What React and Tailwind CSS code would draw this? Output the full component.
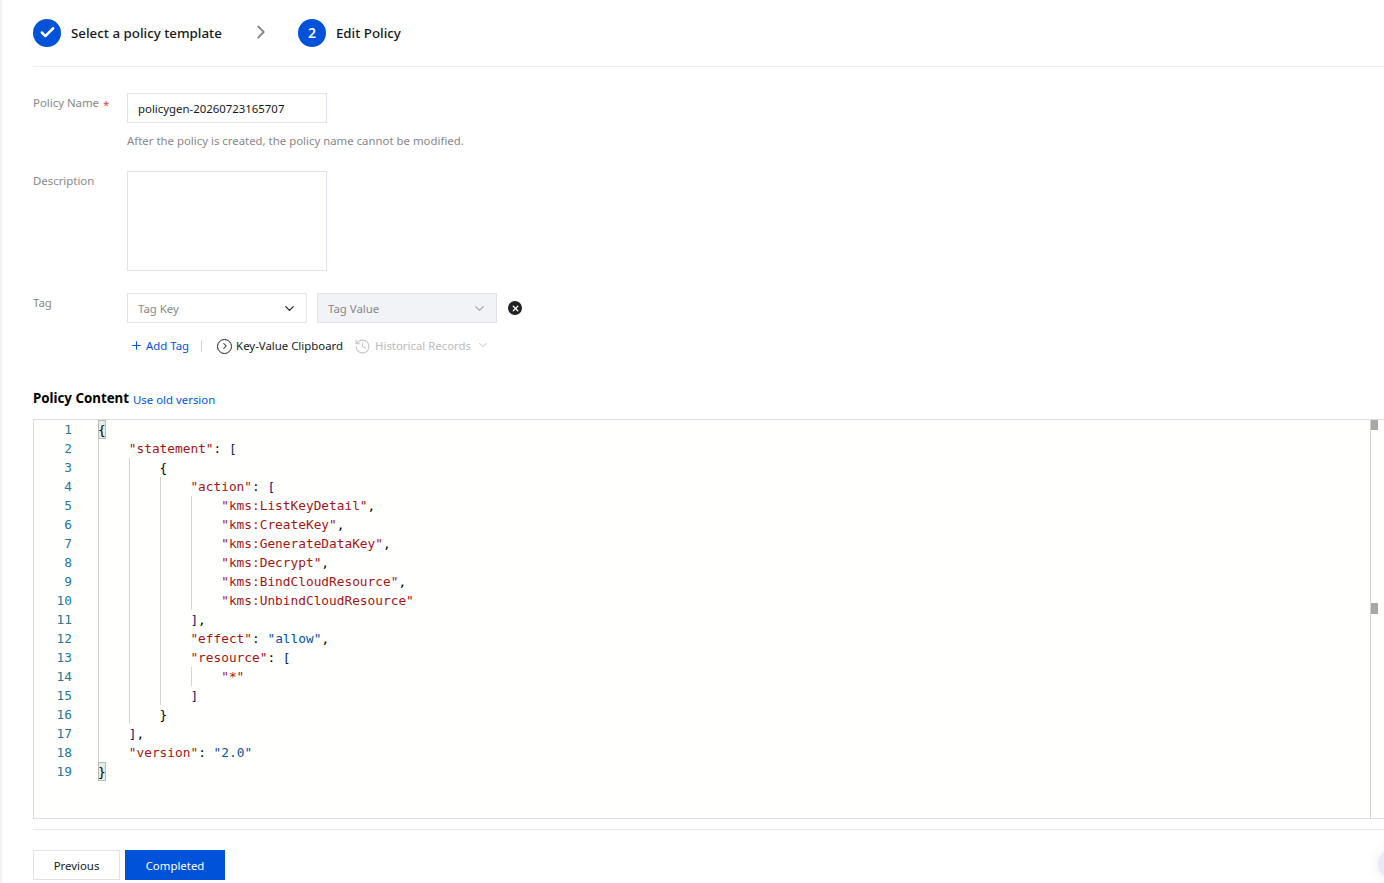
import { Check, ChevronDown, ChevronRight, History, Plus, X } from "lucide-react";

const K = "text-[#a31515]";
const V = "text-[#0451a5]";
const P = "text-[#000000]";
const B = "text-[#0b1a66]";

// each line: indent level, guide levels drawn, tokens
const codeLines = [
  { indent: 0, guides: [], bracket: true, tokens: [["{", P]] },
  { indent: 1, guides: [0], tokens: [['"statement"', K], [": ", P], ["[", B]] },
  { indent: 2, guides: [0, 1], tokens: [["{", P]] },
  { indent: 3, guides: [0, 1, 2], tokens: [['"action"', K], [": ", P], ["[", B]] },
  { indent: 4, guides: [0, 1, 2, 3], tokens: [['"kms:ListKeyDetail"', K], [",", P]] },
  { indent: 4, guides: [0, 1, 2, 3], tokens: [['"kms:CreateKey"', K], [",", P]] },
  { indent: 4, guides: [0, 1, 2, 3], tokens: [['"kms:GenerateDataKey"', K], [",", P]] },
  { indent: 4, guides: [0, 1, 2, 3], tokens: [['"kms:Decrypt"', K], [",", P]] },
  { indent: 4, guides: [0, 1, 2, 3], tokens: [['"kms:BindCloudResource"', K], [",", P]] },
  { indent: 4, guides: [0, 1, 2, 3], tokens: [['"kms:UnbindCloudResource"', K]] },
  { indent: 3, guides: [0, 1, 2], tokens: [["]", B], [",", P]] },
  { indent: 3, guides: [0, 1, 2], tokens: [['"effect"', K], [": ", P], ['"allow"', V], [",", P]] },
  { indent: 3, guides: [0, 1, 2], tokens: [['"resource"', K], [": ", P], ["[", B]] },
  { indent: 4, guides: [0, 1, 2, 3], tokens: [['"*"', K]] },
  { indent: 3, guides: [0, 1, 2], tokens: [["]", B]] },
  { indent: 2, guides: [0, 1], tokens: [["}", P]] },
  { indent: 1, guides: [0], tokens: [["]", B], [",", P]] },
  { indent: 1, guides: [0], tokens: [['"version"', K], [": ", P], ['"2.0"', V]] },
  { indent: 0, guides: [], bracket: true, tokens: [["}", P]] },
];

const guideClass = ["left-0", "left-[31px]", "left-[62px]", "left-[93px]"];

const CodeLine = ({ line, number }) => (
  <div className="flex h-[19px] leading-[19px]">
    <div className="w-[38px] shrink-0 text-right text-[#237893]">{number}</div>
    <div className="relative ml-[26px] flex-1 whitespace-pre">
      {line.guides.map((g) => (
        <span key={g} className={`absolute top-0 h-[19px] w-px bg-[#d3d3d3] ${guideClass[g]}`} />
      ))}
      {line.bracket && (
        <span className="absolute left-0 top-0 h-[19px] w-[8px] border border-[#b9b9b9] bg-[#0064001a]" />
      )}
      <span className="relative" style={{ marginLeft: line.indent * 30.8 }}>
        {line.tokens.map(([text, color], i) => (
          <span key={i} className={color}>
            {text}
          </span>
        ))}
      </span>
    </div>
  </div>
);

const FieldLabel = ({ children, className = "" }) => (
  <div className={`w-[94px] shrink-0 text-[#888888] ${className}`}>{children}</div>
);

export default function App() {
  return (
    <div className="relative h-[883px] w-full overflow-hidden bg-white font-['Noto_Sans','Open_Sans',sans-serif] text-[11.4px] text-[#000000]">
      <div className="flex h-full">
        <div className="w-[2px] shrink-0 bg-[#f1f2f6]" />
        <div className="min-w-0 flex-1 pl-[31px]">
          {/* steps */}
          <div className="flex h-[67px] items-center border-b border-[#ebedf3] pb-px">
            <div className="flex h-[28px] w-[28px] items-center justify-center rounded-full bg-[#0052d9] text-white">
              <Check size={17} strokeWidth={3.5} />
            </div>
            <span className="ml-[10px] pt-px text-[13.35px] font-medium text-[#16181d]">Select a policy template</span>
            <ChevronRight size={22} strokeWidth={2} className="ml-[28px] -translate-y-px text-[#888888]" />
            <div className="ml-[26px] flex h-[28px] w-[28px] items-center justify-center rounded-full bg-[#0052d9] text-[14px] font-semibold text-white">
              2
            </div>
            <span className="ml-[10px] pt-px text-[13.35px] font-medium text-[#16181d]">Edit Policy</span>
          </div>

          {/* policy name */}
          <div className="mt-[26px] flex">
            <FieldLabel className="pt-[1px]">
              Policy Name <span className="relative top-[2px] ml-[1px] text-[#e54545]">*</span>
            </FieldLabel>
            <div>
              <div className="flex h-[30px] w-[200px] items-center border border-[#dfe2ea] pl-[10px] pt-[1px] text-[#16181d]">
                policygen-20260723165707
              </div>
              <div className="mt-[9px] leading-[18px] text-[#888888]">
                After the policy is created, the policy name cannot be modified.
              </div>
            </div>
          </div>

          {/* description */}
          <div className="mt-[21px] flex">
            <FieldLabel className="pt-[1px]">Description</FieldLabel>
            <div className="h-[100px] w-[200px] border border-[#dfe2ea]" />
          </div>

          {/* tag */}
          <div className="mt-[22px] flex">
            <FieldLabel className="pt-[1px]">Tag</FieldLabel>
            <div>
              <div className="flex items-center">
                <div className="flex h-[30px] w-[180px] items-center justify-between border border-[#dfe2ea] pl-[10px] pr-[9px] text-[#888888]">
                  <span className="pt-[1px]">Tag Key</span>
                  <ChevronDown size={15} strokeWidth={2} className="text-[#222222]" />
                </div>
                <div className="ml-[10px] flex h-[30px] w-[180px] items-center justify-between border border-[#dfe2ea] bg-[#f2f3f7] pl-[10px] pr-[9px] text-[#888888]">
                  <span className="pt-[1px]">Tag Value</span>
                  <ChevronDown size={15} strokeWidth={2} className="text-[#aaaaaa]" />
                </div>
                <div className="ml-[11px] flex h-[14px] w-[14px] items-center justify-center rounded-full bg-[#222222] text-white">
                  <X size={9} strokeWidth={3.5} />
                </div>
              </div>
              <div className="mt-[13px] flex h-[20px] items-center">
                <span className="ml-[3px] flex items-center text-[#0052d9]">
                  <Plus size={13} strokeWidth={2} />
                  <span className="ml-[3px]">Add Tag</span>
                </span>
                <span className="ml-[12px] h-[12px] w-px bg-[#cfd3dc]" />
                <span className="ml-[15px] flex h-[15px] w-[15px] items-center justify-center rounded-full border-[1.5px] border-[#222222]">
                  <ChevronRight size={10} strokeWidth={2.5} className="text-[#222222]" />
                </span>
                <span className="ml-[4px] text-[#16181d]">Key-Value Clipboard</span>
                <History size={17} strokeWidth={1.5} className="ml-[11px] text-[#c4c4c4]" />
                <span className="ml-[4px] text-[#bbbbbb]">Historical Records</span>
                <ChevronDown size={14} strokeWidth={1.5} className="ml-[5px] -translate-y-px text-[#bbbbbb]" />
              </div>
            </div>
          </div>

          {/* policy content */}
          <div className="mt-[33px] flex h-[20px] items-center">
            <span className="text-[13.3px] font-bold text-[#000000]">Policy Content</span>
            <span className="ml-[4px] mt-[1px] text-[#0052d9]">Use old version</span>
          </div>

          <div className="relative mt-[10px] h-[400px] border-y border-l border-[#dddddd] bg-[#fffffe] font-['DejaVu_Sans_Mono',monospace] text-[12.8px]">
            {codeLines.map((line, i) => (
              <CodeLine key={i} line={line} number={i + 1} />
            ))}
            {/* overview ruler */}
            <div className="absolute bottom-0 right-[13px] top-0 w-px bg-[#d4d4d4]" />
            <div className="absolute right-[6px] top-0 h-[10px] w-[7px] bg-[#a8a8a8]" />
            <div className="absolute right-[6px] top-[183px] h-[11px] w-[7px] bg-[#a8a8a8]" />
          </div>

          <div className="mt-[10px] border-t border-[#e8e9ef]" />

          {/* buttons */}
          <div className="mt-[20px] flex">
            <div className="flex h-[30px] w-[87px] items-center justify-center border border-[#dfe2ea] pt-px text-[#16181d]">
              Previous
            </div>
            <div className="ml-[5px] flex h-[30px] w-[100px] items-center justify-center bg-[#0052d9] pt-px text-white">
              Completed
            </div>
          </div>
        </div>
      </div>
      {/* floating help button, mostly off screen */}
      <div className="absolute left-[1378px] top-[848px] h-[32px] w-[32px] rounded-full bg-[#e8eafa] shadow-[0_0_16px_rgba(0,0,0,0.08)]" />
    </div>
  );
}
